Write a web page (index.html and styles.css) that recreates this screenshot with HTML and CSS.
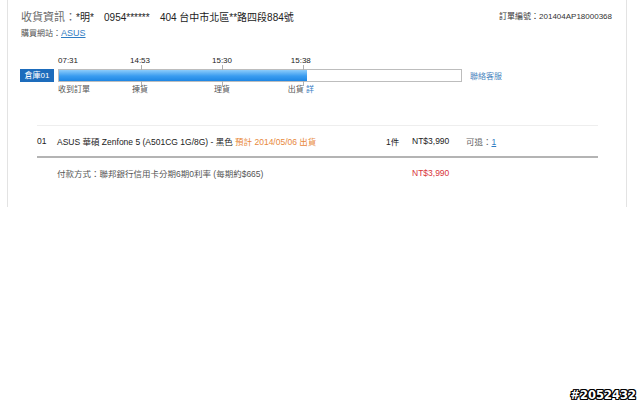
FILE: index.html
```html
<!DOCTYPE html>
<html lang="zh-Hant">
<head>
  <meta charset="UTF-8">
  <title>訂單明細</title>
  <link rel="stylesheet" href="styles.css">
</head>
<body>
  <div class="order">
    <div class="order-head">
      <div>
        <div class="ship-info">
          <span class="ship-label">收貨資訊：</span><span class="ship-val">*明*</span>
          <span class="ship-val">0954******</span>
          <span class="ship-val">404 台中市北區**路四段884號</span>
        </div>
        <div class="site">購買網站：<a href="#">ASUS</a></div>
      </div>
      <div class="order-no">訂單編號：201404AP18000368</div>
    </div>

    <div class="timeline">
      <div class="wh-tag">倉庫01</div>
      <div class="track">
        <div class="marks">
          <span class="time first" style="left: 0%">07:31</span>
          <span class="time" style="left: 20.3%">14:53</span>
          <span class="time" style="left: 40.6%">15:30</span>
          <span class="time" style="left: 60.1%">15:38</span>
        </div>
        <div class="bar">
          <span class="tick" style="left: 20.3%"></span>
          <span class="tick" style="left: 40.6%"></span>
          <span class="tick" style="left: 60.6%"></span>
          <div class="bar-fill" style="width: 61.7%"></div>
        </div>
        <div class="marks">
          <span class="step first" style="left: 0%">收到訂單</span>
          <span class="step" style="left: 20.3%">揀貨</span>
          <span class="step" style="left: 40.6%">理貨</span>
          <span class="step" style="left: 60.1%">出貨 <a class="detail" href="#">詳</a></span>
        </div>
      </div>
      <a class="service" href="#">聯絡客服</a>
    </div>

    <div class="items">
      <div class="item-row">
        <span>01</span>
        <span>ASUS 華碩 Zenfone 5 (A501CG 1G/8G) - 黑色 <span class="eta">預計 2014/05/06 出貨</span></span>
        <span>1件</span>
        <span class="price">NT$3,990</span>
        <span class="refund">可退：<a href="#">1</a></span>
      </div>
      <div class="pay-row">
        <span></span>
        <span class="pay">付款方式：聯邦銀行信用卡分期6期0利率 (每期約$665)</span>
        <span></span>
        <span class="total">NT$3,990</span>
        <span></span>
      </div>
    </div>
  </div>

  <div class="watermark">#2052432</div>
</body>
</html>
```

FILE: styles.css
```css
body {
  margin: 0;
  background: #fff;
  font-family: "Liberation Sans", "Noto Sans CJK TC", sans-serif;
  font-size: 8px;
  color: #333;
  width: 640px;
  height: 406px;
  position: relative;
  overflow: hidden;
}

a {
  color: #2f7cc3;
}

.order {
  margin-left: 7px;
  width: 618px;
  height: 207px;
  border-left: 1px solid #e3e3e3;
  border-right: 1px solid #e3e3e3;
}

.order-head {
  display: flex;
  justify-content: space-between;
  padding: 10px 14px 0 13px;
}

.ship-info {
  line-height: 14px;
  height: 14px;
}

.ship-label {
  font-size: 11px;
  color: #6a6a6a;
}

.ship-val {
  font-size: 10px;
  color: #222;
  margin-right: 8px;
}

.site {
  margin-top: 3px;
  line-height: 12px;
  color: #555;
}

.site a {
  font-size: 9px;
}

.order-no {
  font-size: 8px;
  line-height: 14px;
  color: #333;
}

.timeline {
  display: flex;
  align-items: flex-start;
  margin-top: 16px;
  padding-left: 12px;
}

.wh-tag {
  margin-top: 13px;
  width: 34px;
  height: 13px;
  line-height: 13px;
  background: #1d6cbc;
  color: #fff;
  text-align: center;
  font-size: 8px;
}

.track {
  margin-left: 4px;
  width: 404px;
}

.marks {
  position: relative;
  height: 10px;
  line-height: 10px;
}

.time, .step {
  position: absolute;
  top: 0;
  white-space: nowrap;
  transform: translateX(-50%);
  color: #222;
}

.step {
  color: #555;
}

.time.first, .step.first {
  transform: none;
}

.detail {
  text-decoration: none;
}

.bar {
  position: relative;
  margin: 3px 0;
  height: 11px;
  border: 1px solid #bdbdbd;
  background: #fff;
}

.tick {
  position: absolute;
  top: -5px;
  bottom: -5px;
  width: 1px;
  background: #b0b0b0;
}

.bar-fill {
  position: relative;
  height: 100%;
  background: linear-gradient(#8cccfb, #3a9cf0 55%, #1e86e4);
}

.service {
  margin: 14px 0 0 8px;
  font-size: 8px;
  text-decoration: none;
  color: #4d86c0;
}

.items {
  margin: 30px 0 0 29px;
  width: 561px;
  border-top: 1px solid #eeeeee;
}

.item-row, .pay-row {
  display: grid;
  grid-template-columns: 20px 329px 26px 54px 1fr;
  align-items: center;
  font-size: 8.5px;
}

.item-row {
  height: 30px;
  border-bottom: 2px solid #b4b4b4;
  color: #222;
}

.eta {
  color: #e8883b;
}

.refund {
  color: #666;
}

.pay-row {
  height: 30px;
  color: #555;
}

.total {
  color: #d8343a;
}

.watermark {
  position: absolute;
  right: 4px;
  bottom: 4px;
  font-family: "DejaVu Sans", sans-serif;
  font-weight: bold;
  font-size: 11.5px;
  color: #fff;
  text-shadow: 1px 0 0 #000, -1px 0 0 #000, 0 1px 0 #000, 0 -1px 0 #000,
    1px 1px 0 #000, -1px -1px 0 #000, 1px -1px 0 #000, -1px 1px 0 #000;
}
```
